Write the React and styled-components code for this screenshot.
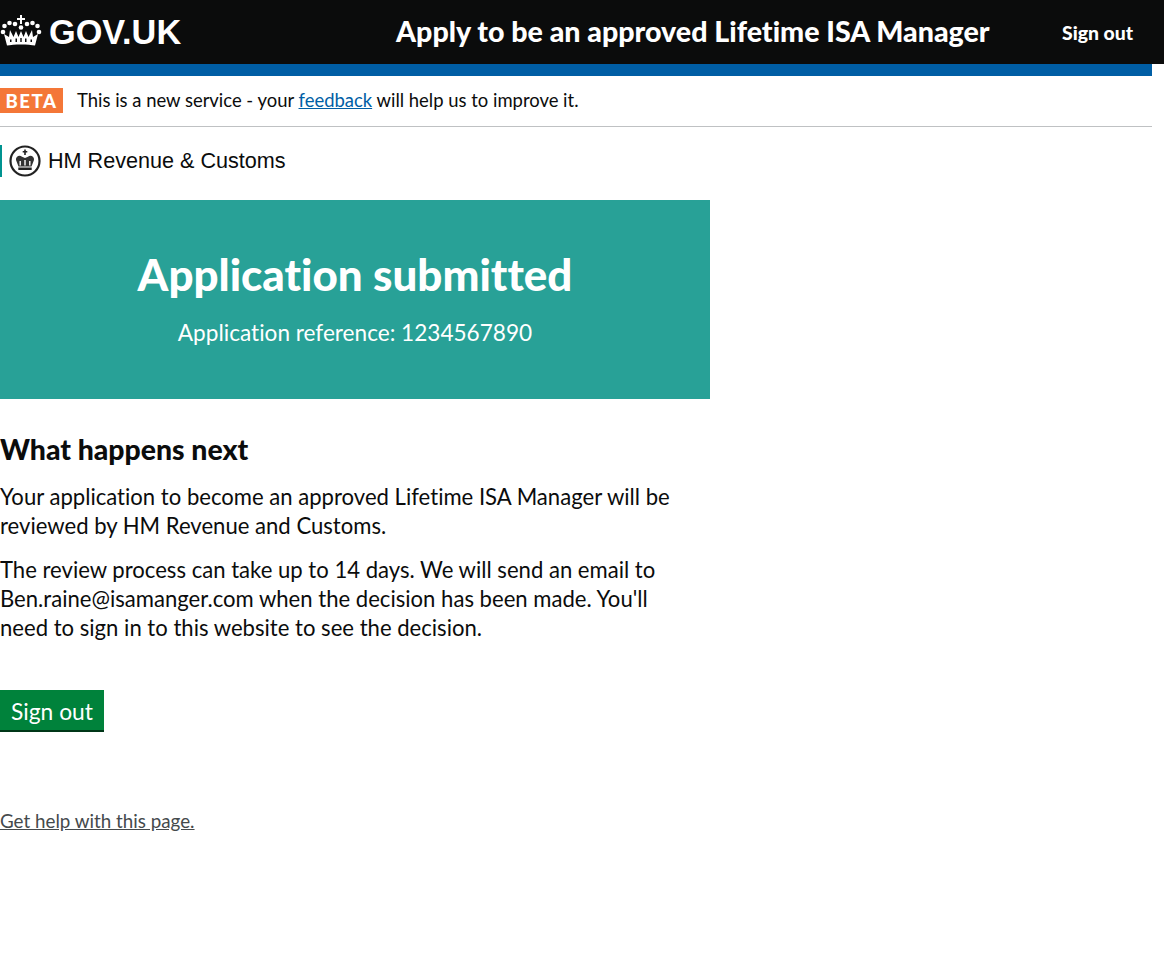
import React from 'react'
import styled, { createGlobalStyle } from 'styled-components'

const GlobalStyle = createGlobalStyle`
  html, body { margin: 0; padding: 0; background: #fff; }
  body {
    font-family: Lato, "Liberation Sans", sans-serif;
    font-variant-ligatures: none;
    color: #0b0c0c;
  }
`

const Page = styled.div`
  width: 1164px;
  min-height: 976px;
  overflow: hidden;
`

const Header = styled.header`
  height: 64px;
  background: #0b0c0c;
  color: #fff;
  display: flex;
  align-items: center;
`

const Logo = styled.a`
  display: flex;
  align-items: center;
  width: 396px;
  flex: none;
  color: #fff;
  font-family: "Liberation Sans", Arial, sans-serif;
  font-weight: 700;
  font-size: 34.3px;
  gap: 7px;

  svg {
    margin-top: -2px;
  }
`

const ServiceName = styled.div`
  width: 666px;
  flex: none;
  margin-top: -3px;
  font-weight: 900;
  font-size: 28.6px;
`

const HeaderLink = styled.a`
  font-weight: 900;
  font-size: 19.4px;
`

const BlueBar = styled.div`
  width: 1152px;
  height: 12px;
  background: #005ea5;
`

const Content = styled.div`
  width: 1152px;
`

const BetaBanner = styled.div`
  height: 50px;
  border-bottom: 1px solid #bfc1c3;
  display: flex;
  align-items: center;
  gap: 14px;
  font-size: 18.45px;
`

const BetaTag = styled.strong`
  width: 63px;
  height: 25px;
  margin-top: -1px;
  background: #f47738;
  color: #fff;
  font-size: 18.5px;
  font-weight: 900;
  letter-spacing: 1.6px;
  display: flex;
  align-items: center;
  justify-content: center;
`

const BannerText = styled.span`
  margin-top: -2px;
`

const FeedbackLink = styled.a`
  color: #005ea5;
  text-decoration: underline;
`

const Organisation = styled.div`
  margin-top: 18px;
  height: 32px;
  border-left: 2px solid #009390;
  padding-left: 7px;
  display: flex;
  align-items: center;
  gap: 7px;
  font-family: "Liberation Sans", Arial, sans-serif;
  font-size: 21.6px;
`

const Panel = styled.section`
  margin-top: 23px;
  width: 710px;
  height: 199px;
  box-sizing: border-box;
  padding-top: 47px;
  background: #28a197;
  color: #fff;
  text-align: center;
`

const PanelTitle = styled.h1`
  margin: 0;
  font-size: 43.9px;
  line-height: 55px;
  font-weight: 900;
`

const PanelReference = styled.p`
  margin: 17px 0 0;
  font-size: 22.6px;
  line-height: 28px;
`

const Main = styled.main`
  width: 690px;
`

const Heading = styled.h2`
  margin: 31px 0 0;
  font-size: 28.4px;
  line-height: 38px;
  font-weight: 900;
`

const Paragraph = styled.p`
  margin: 14px 0 0;
  font-size: 22.1px;
  line-height: 29px;

  & + & {
    margin-top: 15px;
  }
`

const Button = styled.a`
  display: inline-block;
  margin-top: 48px;
  padding: 0 11px;
  height: 40px;
  line-height: 42px;
  background: #00823b;
  color: #fff;
  font-size: 22.8px;
  box-shadow: 0 2px 0 #003618;
`

const HelpLink = styled.a`
  display: block;
  margin-top: 79px;
  color: #454a4c;
  font-size: 18.8px;
  line-height: 24px;
  text-decoration: underline;
`

const CrownLogo = () => (
  <svg width="42" height="32" viewBox="0 0 42 32" fill="#fff">
    <path d="M20 0h2v3h3v2h-3v4h-2V5h-3V3h3z" />
    <circle cx="3" cy="17" r="2.300" />
    <circle cx="4.500" cy="11" r="2.300" />
    <circle cx="9.500" cy="8" r="2.300" />
    <circle cx="15" cy="9" r="2.300" />
    <circle cx="27" cy="9" r="2.300" />
    <circle cx="32.500" cy="8" r="2.300" />
    <circle cx="37.500" cy="11" r="2.300" />
    <circle cx="39" cy="17" r="2.300" />
    <circle cx="21" cy="12.500" r="2.300" />
    <path d="M7 30.500 4 19l5 3 1-7 3.500 7 2.500-6 2.500 6 2.500-6 2.500 6 2.500-6 2.500 6 3.500-7 1 7 5-3-3 11.500c-6-1.500-22-1.500-28 0z" />
    <path fill="#0b0c0c" d="M10 24.500h1.500V27H10zM15.500 23.500H17V27h-1.500zM20.300 23h1.400v4h-1.400zM25 23.500h1.500V27H25zM30.500 24.500H32V27h-1.500z" />
  </svg>
)

const HmrcCrest = () => (
  <svg width="32" height="32" viewBox="0 0 32 32">
    <circle cx="16" cy="16" r="14.500" fill="#fff" stroke="#222" strokeWidth="2.200" />
    <path fill="#222" d="M15.200 4.500h1.600V6h1.500v1.500h-1.500V10h-1.600V7.500h-1.500V6h1.500z" />
    <path fill="#333" d="M9.500 21.500 7 15c-.5-3.500 3.500-5.500 6-3.200l3 1.200 3-1.200c2.500-2.300 6.500-.3 6 3.200l-2.500 6.500z" />
    <path fill="#fff" d="M10.500 20.500V16h1.400v4.500zM15.300 20.500V15h1.400v5.500zM20.100 20.500V16h1.400v4.500z" />
    <path fill="#222" d="M9.300 22.500h13.400v2.500H9.300z" />
  </svg>
)

export default function App() {
  return (
    <Page>
      <GlobalStyle />
      <Header>
        <Logo><CrownLogo />GOV.UK</Logo>
        <ServiceName>Apply to be an approved Lifetime ISA Manager</ServiceName>
        <HeaderLink>Sign out</HeaderLink>
      </Header>
      <BlueBar />
      <Content>
        <BetaBanner>
          <BetaTag>BETA</BetaTag>
          <BannerText>This is a new service - your <FeedbackLink>feedback</FeedbackLink> will help us to improve it.</BannerText>
        </BetaBanner>
        <Organisation><HmrcCrest />HM Revenue &amp; Customs</Organisation>
        <Panel>
          <PanelTitle>Application submitted</PanelTitle>
          <PanelReference>Application reference: 1234567890</PanelReference>
        </Panel>
        <Main>
          <Heading>What happens next</Heading>
          <Paragraph>Your application to become an approved Lifetime ISA Manager will be reviewed by HM Revenue and Customs.</Paragraph>
          <Paragraph>The review process can take up to 14 days. We will send an email to Ben.raine@isamanger.com when the decision has been made. You'll need to sign in to this website to see the decision.</Paragraph>
          <Button>Sign out</Button>
          <HelpLink>Get help with this page.</HelpLink>
        </Main>
      </Content>
    </Page>
  )
}
